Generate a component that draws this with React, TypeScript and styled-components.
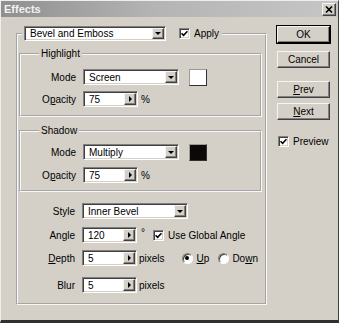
import React from 'react';
import styled, { createGlobalStyle, css } from 'styled-components';

const GlobalStyle = createGlobalStyle`
  html, body {
    margin: 0;
    padding: 0;
    background: #d4d0c8;
  }
  body {
    font-family: "Liberation Sans", Arial, sans-serif;
    font-size: 10px;
    color: #000;
  }
  * {
    box-sizing: border-box;
  }
`;

const sunken = css`
  border-top: 1px solid #808080;
  border-left: 1px solid #808080;
  border-right: 1px solid #fff;
  border-bottom: 1px solid #fff;
  box-shadow: inset 1px 1px 0 #404040, inset -1px -1px 0 #d4d0c8;
`;

const raised = css`
  border-top: 1px solid #f4f4f4;
  border-left: 1px solid #f4f4f4;
  border-right: 1px solid #404040;
  border-bottom: 1px solid #404040;
  box-shadow: inset -1px -1px 0 #808080;
`;

const Window = styled.div`
  width: 339px;
  height: 323px;
  background: #d4d0c8;
  border-left: 1px solid #eeeeee;
  border-top: 1px solid #eeeeee;
  border-right: 1px solid #404040;
  border-bottom: 3px solid #303030;
  display: flex;
  flex-direction: column;
`;

const TitleBar = styled.div`
  height: 16px;
  display: flex;
  align-items: center;
  justify-content: space-between;
  padding: 0 2px 0 2px;
  background: linear-gradient(to right, #8f8f8f, #b4b4b4 45%, #c6c6c6);
`;

const Title = styled.span`
  font-size: 11px;
  font-weight: bold;
  color: #f2f2f2;
  padding-left: 1px;
`;

const CloseButton = styled.span`
  ${raised};
  width: 14px;
  height: 13px;
  background: #d4d0c8;
  display: flex;
  align-items: center;
  justify-content: center;
`;

const Body = styled.div`
  display: flex;
  padding: 9px 0 0 15px;
`;

const Group = styled.fieldset<{ $w: number; $mt?: number; $pt?: number; $pb?: number }>`
  margin: ${p => p.$mt ?? 0}px 0 0 0;
  padding: ${p => p.$pt ?? 0}px 3px ${p => p.$pb ?? 0}px 1px;
  width: ${p => p.$w}px;
  min-width: 0;
  border: 2px groove #f8f8f8;
`;

const TopLegend = styled.legend`
  display: flex;
  align-items: center;
  margin-left: 3px;
  padding: 0 3px 0 2px;
`;

const GroupLegend = styled.legend`
  margin-left: 17px;
  padding: 0 2px;
  line-height: 13px;
  font-size: 10px;
`;

const Row = styled.div<{ $mt?: number }>`
  display: flex;
  align-items: center;
  height: 16px;
  margin-top: ${p => p.$mt ?? 0}px;
`;

const Label = styled.span<{ $w?: number }>`
  width: ${p => p.$w ?? 54}px;
  margin-right: 7px;
  text-align: right;
  white-space: nowrap;
`;

const Lower = styled.div`
  padding-left: 2px;
`;

const SelectBox = styled.div<{ $w: number; $h?: number }>`
  ${sunken};
  width: ${p => p.$w}px;
  height: ${p => p.$h ?? 16}px;
  background: #fff;
  display: flex;
  padding: 1px;
`;

const FieldText = styled.span`
  flex: 1;
  display: flex;
  align-items: center;
  padding-left: 4px;
  white-space: nowrap;
  overflow: hidden;
`;

const ArrowButton = styled.span`
  ${raised};
  width: 12px;
  background: #d4d0c8;
  display: flex;
  align-items: center;
  justify-content: center;
`;

const DownArrow = styled.span`
  width: 0;
  height: 0;
  border-left: 3px solid transparent;
  border-right: 3px solid transparent;
  border-top: 3px solid #000;
`;

const RightArrow = styled.span`
  width: 0;
  height: 0;
  border-top: 3px solid transparent;
  border-bottom: 3px solid transparent;
  border-left: 3px solid #000;
`;

const Swatch = styled.span<{ $color: string }>`
  width: 18px;
  height: 17px;
  margin-left: 10px;
  background: ${p => p.$color};
  border-top: 1px solid #9a9a9a;
  border-left: 1px solid #9a9a9a;
  border-right: 1px solid #303030;
  border-bottom: 1px solid #303030;
`;

const Unit = styled.span<{ $ml?: number; $up?: boolean }>`
  margin-left: ${p => p.$ml ?? 3}px;
  align-self: ${p => (p.$up ? 'flex-start' : 'center')};
  white-space: nowrap;
`;

const CheckBox = styled.span<{ $ml?: number }>`
  ${sunken};
  width: 11px;
  height: 11px;
  margin-left: ${p => p.$ml ?? 0}px;
  background: #fff;
  display: inline-flex;
  align-items: center;
  justify-content: center;
  flex-shrink: 0;
`;

const CheckLabel = styled.span<{ $ml?: number }>`
  margin-left: ${p => p.$ml ?? 4}px;
  white-space: nowrap;
`;

const Radio = styled.span<{ $ml?: number }>`
  width: 11px;
  height: 11px;
  margin-left: ${p => p.$ml ?? 0}px;
  border-radius: 50%;
  border: 1px solid #808080;
  border-right-color: #fff;
  border-bottom-color: #fff;
  box-shadow: inset 1px 1px 0 #404040;
  background: #fff;
  display: inline-flex;
  align-items: center;
  justify-content: center;
  flex-shrink: 0;
`;

const Dot = styled.span`
  width: 4px;
  height: 4px;
  border-radius: 50%;
  background: #000;
`;

const Side = styled.div`
  display: flex;
  flex-direction: column;
  margin-left: 10px;
  width: 54px;
`;

const Button = styled.div<{ $mt?: number; $default?: boolean }>`
  height: 17px;
  width: 53px;
  margin-top: ${p => p.$mt ?? 0}px;
  background: #d4d0c8;
  display: flex;
  align-items: center;
  justify-content: center;
  ${raised};
  ${p =>
    p.$default &&
    css`
      outline: 1px solid #000;
      outline-offset: 0;
      border-right-color: #000;
      border-bottom-color: #000;
    `}
`;

const SideCheck = styled.div<{ $mt?: number }>`
  display: flex;
  align-items: center;
  margin-top: ${p => p.$mt ?? 0}px;
  margin-left: 1px;
`;

const U = styled.span`
  text-decoration: underline;
`;

function Check() {
  return (
    <svg width="7" height="7" viewBox="0 0 7 7">
      <path d="M0.5 3.2 L2.6 5.4 L6.5 1.2" fill="none" stroke="#000" strokeWidth="1.6" />
    </svg>
  );
}

function Select({ w, h, value }: { w: number; h?: number; value: string }) {
  return (
    <SelectBox $w={w} $h={h}>
      <FieldText>{value}</FieldText>
      <ArrowButton>
        <DownArrow />
      </ArrowButton>
    </SelectBox>
  );
}

function Spin({ value }: { value: string }) {
  return (
    <SelectBox $w={55}>
      <FieldText>{value}</FieldText>
      <ArrowButton>
        <RightArrow />
      </ArrowButton>
    </SelectBox>
  );
}

export default function App() {
  return (
    <>
      <GlobalStyle />
      <Window>
        <TitleBar>
          <Title>Effects</Title>
          <CloseButton>
            <svg width="8" height="7" viewBox="0 0 8 7">
              <path d="M1 0.5 L7 6.5 M7 0.5 L1 6.5" stroke="#000" strokeWidth="1.6" />
            </svg>
          </CloseButton>
        </TitleBar>
        <Body>
          <Group $w={251} $pb={10}>
            <TopLegend>
              <Select w={142} h={15} value="Bevel and Emboss" />
              <CheckBox $ml={13}>
                <Check />
              </CheckBox>
              <CheckLabel>Apply</CheckLabel>
            </TopLegend>

            <Group $w={243} $mt={6} $pt={9} $pb={8}>
              <GroupLegend>Highlight</GroupLegend>
              <Row>
                <Label>Mode</Label>
                <Select w={96} value="Screen" />
                <Swatch $color="#ffffff" />
              </Row>
              <Row $mt={6}>
                <Label>
                  O<U>p</U>acity
                </Label>
                <Spin value="75" />
                <Unit>%</Unit>
              </Row>
            </Group>

            <Group $w={243} $mt={7} $pt={7} $pb={7}>
              <GroupLegend>Shadow</GroupLegend>
              <Row>
                <Label>Mode</Label>
                <Select w={96} value="Multiply" />
                <Swatch $color="#0c0808" />
              </Row>
              <Row $mt={7}>
                <Label>
                  O<U>p</U>acity
                </Label>
                <Spin value="75" />
                <Unit>%</Unit>
              </Row>
            </Group>

            <Lower>
              <Row $mt={11}>
                <Label>Style</Label>
                <Select w={106} value="Inner Bevel" />
              </Row>
              <Row $mt={8}>
                <Label>Angle</Label>
                <Spin value="120" />
                <Unit $ml={4} $up>
                  °
                </Unit>
                <CheckBox $ml={8}>
                  <Check />
                </CheckBox>
                <CheckLabel $ml={4}>Use Global Angle</CheckLabel>
              </Row>
              <Row $mt={7}>
                <Label>
                  <U>D</U>epth
                </Label>
                <Spin value="5" />
                <Unit $ml={2}>pixels</Unit>
                <Radio $ml={17}>
                  <Dot />
                </Radio>
                <CheckLabel $ml={4}>
                  <U>U</U>p
                </CheckLabel>
                <Radio $ml={9} />
                <CheckLabel $ml={3}>
                  Do<U>w</U>n
                </CheckLabel>
              </Row>
              <Row $mt={11}>
                <Label>Blur</Label>
                <Spin value="5" />
                <Unit $ml={2}>pixels</Unit>
              </Row>
            </Lower>
          </Group>

          <Side>
            <Button $default $mt={0}>OK</Button>
            <Button $mt={8}>Cancel</Button>
            <Button $mt={13}>
              <U>P</U>rev
            </Button>
            <Button $mt={5}>
              <U>N</U>ext
            </Button>
            <SideCheck $mt={16}>
              <CheckBox>
                <Check />
              </CheckBox>
              <CheckLabel $ml={4}>Preview</CheckLabel>
            </SideCheck>
          </Side>
        </Body>
      </Window>
    </>
  );
}
